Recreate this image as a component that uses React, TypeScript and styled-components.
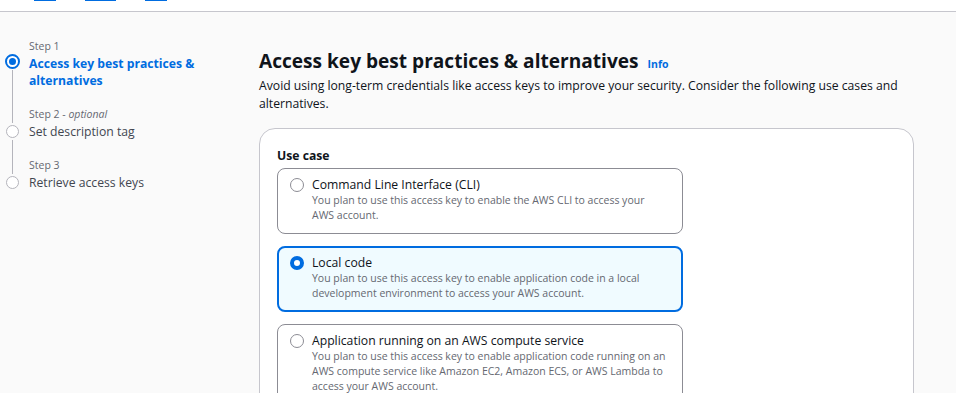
import React from "react";
import styled, { createGlobalStyle } from "styled-components";

const Global = createGlobalStyle`
  html, body { margin: 0; padding: 0; background: #fafafa; }
  body { font-family: "Open Sans", "Noto Sans", sans-serif; color: #0f141a; }
  * { box-sizing: border-box; }
`;

const Page = styled.div`
  width: 956px;
  height: 393px;
  overflow: hidden;
  display: flex;
  flex-direction: column;
`;

const TopBar = styled.div`
  height: 12px;
  flex-shrink: 0;
  background: #fff;
  border-bottom: 1px solid #c6c6cd;
  display: flex;
  align-items: flex-start;
`;

const TopMark = styled.span<{ $w: number; $ml: number }>`
  display: block;
  height: 1px;
  width: ${(p) => p.$w}px;
  margin-left: ${(p) => p.$ml}px;
  background: #006ce0;
`;

const Body = styled.div`
  display: flex;
  flex: 1;
  min-height: 0;
`;

/* ---------- Side navigation ---------- */

const Nav = styled.nav`
  width: 259px;
  flex-shrink: 0;
  padding-top: 27px;
  display: flex;
  flex-direction: column;
`;

const Step = styled.div`
  display: flex;
`;

const Indicator = styled.div`
  width: 24px;
  flex-shrink: 0;
  display: flex;
  flex-direction: column;
  align-items: center;
`;

const Line = styled.div<{ $h?: number; $hidden?: boolean }>`
  width: 1px;
  background: ${(p) => (p.$hidden ? "transparent" : "#b4b4bb")};
  ${(p) => (p.$h !== undefined ? `height: ${p.$h}px;` : "flex: 1;")}
`;

const Dot = styled.div<{ $active?: boolean }>`
  flex-shrink: 0;
  border-radius: 50%;
  ${(p) =>
    p.$active
      ? `width: 15px; height: 15px; margin: 1px 0; border: 2px solid #006ce0; background: #fff;
         display: flex; align-items: center; justify-content: center;`
      : `width: 13px; height: 13px; margin: 2px 0; border: 1.5px solid #b4b4bb; background: #fff;`}
`;

const InnerDot = styled.div`
  width: 7px;
  height: 7px;
  border-radius: 50%;
  background: #006ce0;
`;

const StepText = styled.div<{ $last?: boolean }>`
  margin-left: 5px;
  padding-bottom: ${(p) => (p.$last ? 0 : 18)}px;
`;

const StepLabel = styled.div`
  font-size: 10.5px;
  line-height: 14px;
  color: #656871;
  margin-bottom: 2px;
  em {
    font-style: italic;
  }
`;

const StepTitle = styled.div<{ $active?: boolean }>`
  font-size: 12.2px;
  line-height: 17px;
  font-weight: ${(p) => (p.$active ? 700 : 400)};
  color: ${(p) => (p.$active ? "#006ce0" : "#424650")};
  width: 180px;
`;

/* ---------- Main content ---------- */

const Main = styled.main`
  width: 655px;
  padding-top: 37px;
  display: flex;
  flex-direction: column;
`;

const HeadingRow = styled.div`
  display: flex;
  align-items: baseline;
  gap: 9px;
`;

const Title = styled.h1`
  margin: 0;
  font-size: 19.1px;
  line-height: 24px;
  font-weight: 700;
  color: #0f141a;
`;

const InfoLink = styled.a`
  font-size: 10.5px;
  font-weight: 700;
  color: #006ce0;
  text-decoration: none;
`;

const Desc = styled.p`
  margin: 4px 0 0;
  font-size: 12.2px;
  line-height: 18px;
  color: #0f141a;
`;

const Card = styled.section`
  margin-top: 15px;
  background: #fff;
  border: 1px solid #c6c6cd;
  border-radius: 16px;
  padding: 18px 17px 20px;
  flex: 1;
`;

const FieldLabel = styled.div`
  font-size: 12.2px;
  line-height: 17px;
  font-weight: 700;
  color: #0f141a;
  margin-bottom: 4px;
`;

const Options = styled.div`
  width: 406px;
  display: flex;
  flex-direction: column;
  gap: 12px;
`;

const Option = styled.label<{ $selected?: boolean }>`
  display: flex;
  gap: 8px;
  border-radius: 8px;
  border: ${(p) => (p.$selected ? "2px solid #006ce0" : "1px solid #8c8c94")};
  background: ${(p) => (p.$selected ? "#f0fbff" : "#fff")};
  padding: ${(p) => (p.$selected ? "6px 13px 9px 11px" : "7px 14px 10px 12px")};
  cursor: pointer;
`;

const Radio = styled.span<{ $checked?: boolean }>`
  flex-shrink: 0;
  width: 14px;
  height: 14px;
  margin-top: 2px;
  border-radius: 50%;
  background: #fff;
  border: ${(p) => (p.$checked ? "4px solid #006ce0" : "1px solid #8c8c94")};
`;

const OptBody = styled.div`
  display: flex;
  flex-direction: column;
`;

const OptTitle = styled.div`
  font-size: 12.2px;
  line-height: 17px;
  color: #0f141a;
`;

const OptDesc = styled.div`
  font-size: 10.5px;
  line-height: 15px;
  color: #656871;
`;

const steps = [
  { label: "Step 1", title: "Access key best practices & alternatives", active: true },
  { label: "Step 2", optional: true, title: "Set description tag" },
  { label: "Step 3", title: "Retrieve access keys" },
];

const useCases = [
  {
    title: "Command Line Interface (CLI)",
    desc: "You plan to use this access key to enable the AWS CLI to access your AWS account.",
  },
  {
    title: "Local code",
    desc: "You plan to use this access key to enable application code in a local development environment to access your AWS account.",
    selected: true,
  },
  {
    title: "Application running on an AWS compute service",
    desc: "You plan to use this access key to enable application code running on an AWS compute service like Amazon EC2, Amazon ECS, or AWS Lambda to access your AWS account.",
  },
];

export default function App() {
  return (
    <Page>
      <Global />
      <TopBar>
        <TopMark $w={22} $ml={34} />
        <TopMark $w={31} $ml={29} />
        <TopMark $w={22} $ml={29} />
      </TopBar>
      <Body>
        <Nav>
          {steps.map((s, i) => {
            const first = i === 0;
            const last = i === steps.length - 1;
            return (
              <Step key={s.label}>
                <Indicator>
                  <Line $h={first ? 14 : 16} $hidden={first} />
                  <Dot $active={s.active}>{s.active && <InnerDot />}</Dot>
                  <Line $hidden={last} />
                </Indicator>
                <StepText $last={last}>
                  <StepLabel>
                    {s.label}
                    {s.optional && (
                      <>
                        {" - "}
                        <em>optional</em>
                      </>
                    )}
                  </StepLabel>
                  <StepTitle $active={s.active}>{s.title}</StepTitle>
                </StepText>
              </Step>
            );
          })}
        </Nav>
        <Main>
          <HeadingRow>
            <Title>Access key best practices &amp; alternatives</Title>
            <InfoLink href="#">Info</InfoLink>
          </HeadingRow>
          <Desc>
            Avoid using long-term credentials like access keys to improve your security. Consider the
            following use cases and alternatives.
          </Desc>
          <Card>
            <FieldLabel>Use case</FieldLabel>
            <Options>
              {useCases.map((u) => (
                <Option key={u.title} $selected={u.selected}>
                  <Radio $checked={u.selected} />
                  <OptBody>
                    <OptTitle>{u.title}</OptTitle>
                    <OptDesc>{u.desc}</OptDesc>
                  </OptBody>
                </Option>
              ))}
            </Options>
          </Card>
        </Main>
      </Body>
    </Page>
  );
}
